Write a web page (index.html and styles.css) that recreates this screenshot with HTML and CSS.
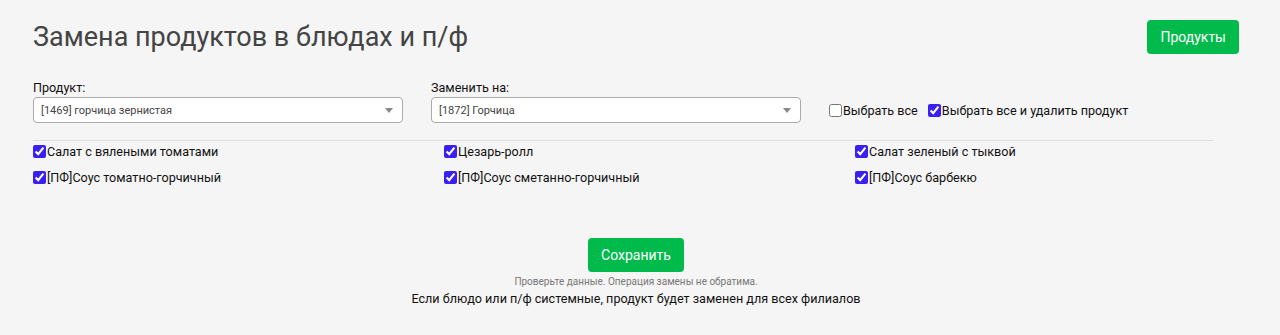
FILE: index.html
```html
<!DOCTYPE html>
<html>
  <head>
    <meta charset="utf-8">
    <meta name="viewport" content="width=device-width, initial-scale=1">
    <title>Замена продуктов</title>
    <link rel="stylesheet" href="styles.css">
  </head>
  <body>
    <div id="page">
      <div class="header">
        <h1 class="title">Замена продуктов в блюдах и п/ф</h1>
        <button class="btn">Продукты</button>
      </div>

      <div class="filters">
        <div class="field">
          <label class="field-label">Продукт:</label>
          <div class="select"><span>[1469] горчица зернистая</span><b class="arrow"></b></div>
        </div>
        <div class="field">
          <label class="field-label">Заменить на:</label>
          <div class="select"><span>[1872] Горчица</span><b class="arrow"></b></div>
        </div>
        <div class="toggles">
          <label class="check"><input type="checkbox">Выбрать все</label>
          <label class="check"><input type="checkbox" checked>Выбрать все и удалить продукт</label>
        </div>
      </div>

      <hr class="divider">

      <div class="dishes">
        <label class="check"><input type="checkbox" checked>Салат с вялеными томатами</label>
        <label class="check"><input type="checkbox" checked>Цезарь-ролл</label>
        <label class="check"><input type="checkbox" checked>Салат зеленый с тыквой</label>
        <label class="check"><input type="checkbox" checked>[ПФ]Соус томатно-горчичный</label>
        <label class="check"><input type="checkbox" checked>[ПФ]Соус сметанно-горчичный</label>
        <label class="check"><input type="checkbox" checked>[ПФ]Соус барбекю</label>
      </div>

      <div class="footer">
        <button class="btn">Сохранить</button>
        <p class="hint">Проверьте данные. Операция замены не обратима.</p>
        <p class="note">Если блюдо или п/ф системные, продукт будет заменен для всех филиалов</p>
      </div>
    </div>
  </body>
</html>
```

FILE: styles.css
```css
body {
  margin: 0;
  background: #f5f5f5;
  font-family: Roboto, 'Liberation Sans', sans-serif;
  color: #111;
}

#page {
  width: 1206px;
  padding: 20px 0 0 33px;
}

.header {
  display: flex;
  justify-content: space-between;
  align-items: center;
  height: 34px;
}

.title {
  margin: 0;
  font-size: 27px;
  font-weight: 400;
  color: #444;
}

.btn {
  height: 34px;
  padding: 0 13px;
  border: none;
  border-radius: 4px;
  background: #00bb4c;
  color: #fff;
  font-family: inherit;
  font-size: 14px;
}

.filters {
  display: flex;
  align-items: flex-end;
  gap: 28px;
  margin-top: 26px;
}

.field {
  display: flex;
  flex-direction: column;
  width: 370px;
}

.field-label {
  font-size: 12.6px;
  line-height: 15px;
  margin-bottom: 2px;
}

.select {
  display: flex;
  align-items: center;
  justify-content: space-between;
  height: 26px;
  padding: 0 7px;
  border: 1px solid #aaa;
  border-radius: 4px;
  background: #fff;
  font-size: 11px;
  color: #444;
  box-sizing: border-box;
}

.arrow {
  border-top: 5px solid #888;
  border-left: 4px solid transparent;
  border-right: 4px solid transparent;
  margin-right: 2px;
}

.toggles {
  display: flex;
  gap: 10px;
  height: 26px;
  align-items: center;
}

.check {
  display: flex;
  align-items: center;
  font-size: 12.6px;
  line-height: 15px;
}

.check input {
  width: 13px;
  height: 13px;
  margin: 0 1px 0 0;
  accent-color: #3a1ff2;
}

.divider {
  width: 1180px;
  margin: 17px 0 3px 0;
  border: none;
  border-top: 1px solid #ddd;
}

.dishes {
  display: grid;
  grid-template-columns: repeat(3, 411px);
  row-gap: 11px;
}

.footer {
  display: flex;
  flex-direction: column;
  align-items: center;
  margin-top: 53px;
}

.hint {
  margin: 4px 0 0 0;
  font-size: 10px;
  color: #777;
}

.note {
  margin: 4px 0 0 0;
  font-size: 12.6px;
}
```
